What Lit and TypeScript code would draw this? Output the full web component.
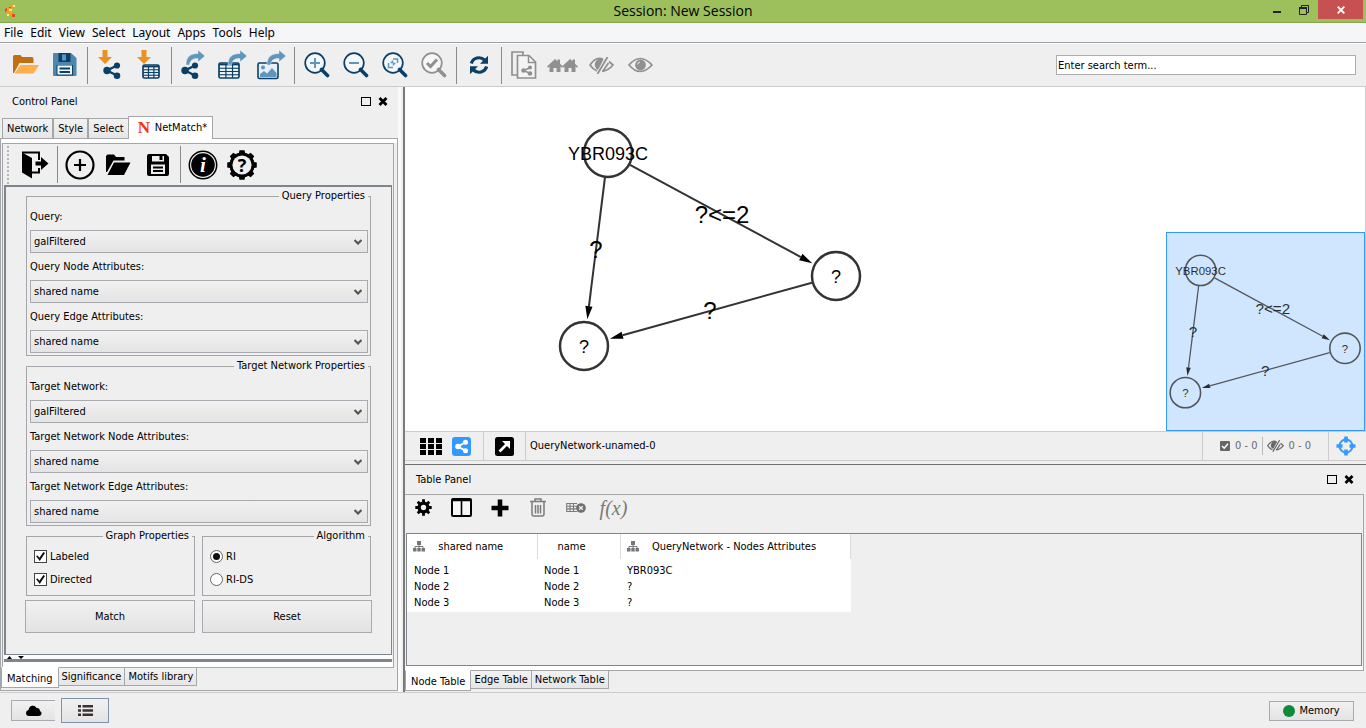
import { LitElement, html, svg, css, type TemplateResult } from "lit";
import { customElement, property, state } from "lit/decorators.js";
import { classMap } from "lit/directives/class-map.js";

const NAVY = "#0a4068";
const BLUE = "#5f96bd";
const ORANGE = "#ea9123";
const GRAY = "#909090";

const icon = (w: number, h: number, body: unknown) =>
  html`<svg width=${w} height=${h} viewBox="0 0 ${w} ${h}" aria-hidden="true">${body}</svg>`;

/* ---------- shared glyph pieces ---------- */

const share = (x: number, y: number) => svg`
  <g transform="translate(${x} ${y})" fill=${NAVY} stroke=${NAVY}>
    <path d="M14 3.5L4 8.5L14 13.5" fill="none" stroke-width="2.4"/>
    <circle cx="14" cy="3.5" r="3.1" stroke="none"/>
    <circle cx="4" cy="8.5" r="3.7" stroke="none"/>
    <circle cx="14" cy="13.7" r="3.3" stroke="none"/>
  </g>`;

const grid = (x: number, y: number, w: number, h: number, rows: number) => {
  const rh = (h - 4) / rows;
  return svg`<g transform="translate(${x} ${y})">
    <rect x="1" y="1" width=${w - 2} height=${h - 2} rx="1.5" fill="#f4f7f9" stroke=${NAVY} stroke-width="1.700"/>
    <path d="M1 2.500H${w - 1}" stroke=${NAVY} stroke-width="1.800"/>
    ${Array.from({ length: rows - 1 }, (_, i) =>
      svg`<path d="M1 ${3 + rh * (i + 1)}H${w - 1}" stroke=${NAVY} stroke-width="1.1"/>`)}
    <path d="M${w * 0.36} 2V${h - 1}M${w * 0.66} 2V${h - 1}" stroke=${NAVY} stroke-width="1.2"/>
  </g>`;
};

const downArrow = svg`<path d="M4.500 0h5v7h4.500L7 14L0 7H4.500z" fill=${ORANGE}/>`;
const exportArrow = (x: number) => svg`<g transform="translate(${x} 0)">
  <path d="M0 15C0 7 4 3.500 12 3.500V0L19 6L12 12V8.500C7 8.500 4 10 3.500 15z" fill=${BLUE} stroke="#efefef" stroke-width=".5"/></g>`;

const lens = (color: string, inner: unknown) =>
  icon(26, 26, svg`
    <circle cx="11" cy="11" r="9.800" fill="#f6f7f8" stroke=${color} stroke-width="1.700"/>
    <path d="M17.500 17.500L23.500 23.500" stroke=${color} stroke-width="3.600" stroke-linecap="round"/>
    ${inner}`);

const eye = (color: string) => svg`
  <path d="M1 8Q12 -5 24 8Q12 21 1 8z" fill="none" stroke=${color} stroke-width="1.700"/>
  <circle cx="12.500" cy="8" r="5.400" fill=${color}/>
  <path d="M9.500 7.500A3 3 0 0 1 12 5" fill="none" stroke="#efefef" stroke-width="1"/>`;

const eyeSlash = (color: string) => svg`
  <path d="M14 2.200Q7 -1 1 8Q4 12.500 8 14" fill="none" stroke=${color} stroke-width="1.700"/>
  <path d="M20 4.500L24 8Q19 14 13 14.300" fill="none" stroke=${color} stroke-width="1.700"/>
  <path d="M14.500 2.500A5.600 5.600 0 0 0 9 13z" fill=${color}/>
  <path d="M18.500 0L8.500 17M19.500 6L14 14" stroke=${color} stroke-width="1.800"/>`;

const gearPath = (cx: number, cy: number, ro: number, ri: number) => {
  const pts: string[] = [];
  for (let i = 0; i < 8; i++) {
    const a = (i * Math.PI) / 4;
    for (const [d, r] of [[-0.25, ri], [-0.17, ro], [0.17, ro], [0.25, ri]] as const) {
      pts.push(`${(cx + r * Math.sin(a + d)).toFixed(2)} ${(cy - r * Math.cos(a + d)).toFixed(2)}`);
    }
  }
  return `M${pts.join("L")}z`;
};

const house = (x: number) => svg`<path transform="translate(${x} 0)" fill=${GRAY}
  d="M0 8.500L8 1L10.500 3.300V1.500H13V5.700L16 8.500L15 9.800L13.500 8.500V14H9.500V10H6.500V14H2.500V8.500L1 9.800z"/>`;

const tree = icon(12, 11, svg`
  <path d="M6 3V6M2 8V5.500H10V8M6 5V8" fill="none" stroke="#777" stroke-width="1"/>
  <path d="M4 0H8V4H4zM0 7H3.500V10.500H0zM4.300 7H7.700V10.500H4.300zM8.500 7H12V10.500H8.500z" fill="#74767c"/>`);

const maximize = icon(10, 10, svg`<rect x=".5" y=".5" width="9" height="8" fill="none" stroke="#000" stroke-width="1"/>`);
const cross = icon(10, 10, svg`<path d="M1.500 1L8.500 8M8.500 1L1.500 8" stroke="#000" stroke-width="2.800"/>`);

/* ---------- toolbar content ---------- */

type Tool = [label: string, glyph: TemplateResult];

const mainTools: Tool[][] = [
  [
    ["Open session", icon(26, 20, svg`
      <path d="M0 18V1.500Q0 0 1.500 0H7Q8 0 9 2H19Q20.500 2 20.500 4V8H6.500L1 18z" fill="#c26f14"/>
      <path d="M7.500 10H26L20.500 18.500H1.500z" fill="#ffae4d"/>`)],
    ["Save session", icon(24, 24, svg`
      <path d="M0 1Q0 0 1 0H18L23.500 5V22Q23.500 23 22.500 23H1Q0 23 0 22z" fill="#4f86ad"/>
      <path d="M5.500 0H17.500V9H5.500z" fill=${NAVY}/><path d="M9 1.500h4v6H9z" fill="#5f96bd"/>
      <path d="M3.500 12H20V22.500H3.500z" fill=${NAVY}/>
      <path d="M4.500 12.500H19V21.500H4.500z" fill="#f3f6f8"/>
      <path d="M6.500 14.500h10.500v2H6.500zM6.500 18h10.500v2H6.500z" fill=${NAVY}/>`)],
  ],
  [
    ["Import network", icon(24, 30, svg`${downArrow}${share(5, 12)}`)],
    ["Import table", icon(24, 30, svg`${downArrow}${grid(5, 14, 18, 15, 4)}`)],
  ],
  [
    ["Export network", icon(26, 30, svg`${exportArrow(5)}${share(0, 12)}`)],
    ["Export table", icon(30, 30, svg`${grid(0, 12, 22, 17, 4)}${exportArrow(10)}`)],
    ["Export image", icon(30, 30, svg`
      <rect x="1" y="13" width="20" height="15.500" rx="1.500" fill="#e9f0f5" stroke=${NAVY} stroke-width="1.600"/>
      <circle cx="6" cy="17.500" r="2" fill=${BLUE}/>
      <path d="M3 27V24L7 21L10 23.500L15 18L19.500 23V27z" fill=${BLUE}/>${exportArrow(10)}`)],
  ],
  [
    ["Zoom in", lens(NAVY, svg`<path d="M6 11H16M11 6V16" stroke=${BLUE} stroke-width="2"/>`)],
    ["Zoom out", lens(NAVY, svg`<path d="M6 11H16" stroke=${BLUE} stroke-width="2"/>`)],
    ["Fit content", lens(NAVY, svg`<path d="M11 7H15.500V11M6.500 11V15.500H11M11.500 13.500V11.500H13.500M10.500 8.500V10.500H8.500" fill="none" stroke=${BLUE} stroke-width="1.500"/>`)],
    ["Fit selected", lens(GRAY, svg`<path d="M6 11L9.500 14.500L16 7.500" fill="none" stroke=${GRAY} stroke-width="3"/>`)],
  ],
  [
    ["Refresh layout", icon(20, 20, svg`
      <path d="M2.300 8.500A8 8 0 0 1 15.500 5M17.700 11.500A8 8 0 0 1 4.500 15" fill="none" stroke=${NAVY} stroke-width="3.200"/>
      <path d="M19 .8V8.800H11zM1 19.200V11.200H9z" fill=${NAVY}/>`)],
  ],
  [
    ["New network from selection", icon(26, 28, svg`
      <path d="M6 24H1V1H12V4" fill="none" stroke=${GRAY} stroke-width="1.700"/>
      <path d="M6.500 4.500H18L24.500 11V27H6.500z" fill="#f4f4f4" stroke=${GRAY} stroke-width="1.700"/>
      <path d="M17.500 4.500V11.500H24.500" fill="none" stroke=${GRAY} stroke-width="1.500"/>
      <path d="M19.500 16.500L12.500 19.500L19.500 22.500" fill="none" stroke=${GRAY} stroke-width="1.500"/>
      <circle cx="19" cy="16.500" r="2" fill=${GRAY}/><circle cx="12.500" cy="19.500" r="2.300" fill=${GRAY}/><circle cx="19" cy="22.500" r="2.300" fill=${GRAY}/>`)],
    ["First neighbors", icon(31, 15, svg`${house(0)}${house(15)}`)],
    ["Hide selected", icon(25, 17, eyeSlash(GRAY))],
    ["Show all", icon(25, 16, eye(GRAY))],
  ],
];

const panelTools: Tool[][] = [
  [
    ["Exit", icon(28, 28, svg`
      <path d="M1 1.500L11 7V27.500L1 21.500z" fill="#000"/>
      <path d="M1 1.500H18V9M18 17V21.500H11" fill="none" stroke="#000" stroke-width="2"/>
      <path d="M14.500 10.500H20V6L27.500 12.500L20 19V14.500H14.500z" fill="#000"/>`)],
  ],
  [
    ["New query", icon(30, 30, svg`<circle cx="15" cy="15" r="13.500" fill="none" stroke="#000" stroke-width="2.200"/><path d="M9 15H21M15 9V21" stroke="#000" stroke-width="2.200"/>`)],
    ["Open query", icon(25, 22, svg`<path d="M0 18V2L1.500 .5H8L10 3H18.500V6.500H7.500L1 18z"/><path d="M8 8.500H24.500L18 21H1.500z"/>`)],
    ["Save query", icon(22, 22, svg`
      <path d="M2 0H19L22 3V20Q22 22 20 22H2Q0 22 0 20V2Q0 0 2 0z"/>
      <path d="M5 2H17V7.500H5z" fill="#efefef"/><path d="M12.500 2H15.500V6H12.500z"/>
      <path d="M4 10.500H18V20H4z" fill="#efefef"/><path d="M6 12.500h10v2H6zM6 16h10v2H6z"/>`)],
  ],
  [
    ["About", icon(30, 30, svg`<circle cx="15" cy="15" r="13.700" fill="none" stroke="#000" stroke-width="1.500"/><circle cx="15" cy="15" r="11.800"/>
      <text x="15" y="22" text-anchor="middle" font-family="Liberation Serif, serif" font-weight="bold" font-style="italic" font-size="21" fill="#fff">i</text>`)],
    ["Help", icon(30, 30, svg`<path d=${gearPath(15, 15, 15, 12.5)}/><circle cx="15" cy="15" r="12.500"/><circle cx="15" cy="15" r="9.600" fill="#efefef"/>
      <text x="15" y="21.500" text-anchor="middle" font-family="Open Sans, sans-serif" font-weight="bold" font-size="18" fill="#000">?</text>`)],
  ],
];

const tableTools: Tool[] = [
  ["Table options", icon(17, 17, svg`<path d=${gearPath(8.5, 8.5, 8.3, 5.8)}/><circle cx="8.500" cy="8.500" r="6"/><circle cx="8.500" cy="8.500" r="2.700" fill="#efefef"/>`)],
  ["Show columns", icon(21, 19, svg`<rect x="1" y="1" width="19" height="17" rx="1" fill="#f6f6f6" stroke="#000" stroke-width="2"/><path d="M1 2H20" stroke="#000" stroke-width="2.500"/><path d="M10.500 2V18" stroke="#000" stroke-width="1.600"/>`)],
  ["Create column", icon(18, 18, svg`<path d="M9 .5V17.500M.5 9H17.500" stroke="#000" stroke-width="4.600"/>`)],
  ["Delete columns", icon(18, 19, svg`<path d="M1 3.500H17M6 3V1H12V3M3 4V16Q3 18 5 18H13Q15 18 15 16V4M6.500 7V15.500M9 7V15.500M11.500 7V15.500" fill="none" stroke="#7b7b7b" stroke-width="1.500"/>`)],
  ["Delete table", icon(20, 12, svg`<path d="M.5 1.500H11M.5 4.200H11M.5 6.900H11M.5 9.500H11M.7 1V10M4 1V10M7.500 1V10" stroke="#7b7b7b" stroke-width="1.100" fill="none"/><circle cx="15" cy="6" r="4.800" fill="#6f6f6f"/><path d="M13.200 4.200L16.800 7.800M16.800 4.200L13.200 7.800" stroke="#efefef" stroke-width="1.400"/>`)],
];

/* ---------- network drawing ---------- */

interface GraphNode { x: number; y: number; label: string }
const nodes: GraphNode[] = [
  { x: 203, y: 66, label: "YBR093C" },
  { x: 431, y: 189, label: "?" },
  { x: 179, y: 259, label: "?" },
];
const edges: { from: number; to: number; label: string }[] = [
  { from: 0, to: 1, label: "?<=2" },
  { from: 0, to: 2, label: "?" },
  { from: 1, to: 2, label: "?" },
];

@customElement("network-graph")
class NetworkGraph extends LitElement {
  @property() box = "0 0 480 344";

  static styles = css`
    :host { display: block; }
    svg { display: block; width: 100%; height: 100%; }
    text { font-family: "Liberation Sans", Arial, sans-serif; text-anchor: middle; fill: #000; }
    .node { font-size: 18px; }
    .edge { font-size: 24px; }
  `;

  private edge(e: (typeof edges)[number]) {
    const a = nodes[e.from];
    const b = nodes[e.to];
    const len = Math.hypot(b.x - a.x, b.y - a.y);
    const ux = (b.x - a.x) / len;
    const uy = (b.y - a.y) / len;
    const tx = b.x - ux * 27;
    const ty = b.y - uy * 27;
    const bx = tx - ux * 13;
    const by = ty - uy * 13;
    return svg`
      <path d="M${a.x + ux * 25} ${a.y + uy * 25}L${bx} ${by}" stroke="#333" stroke-width="2"/>
      <path d="M${tx} ${ty}L${bx - uy * 3.6} ${by + ux * 3.6}L${bx + uy * 3.6} ${by - ux * 3.6}z" fill="#000"/>
      <text class="edge" x=${(a.x + b.x) / 2} y=${(a.y + b.y) / 2 + 8}>${e.label}</text>`;
  }

  render() {
    return html`<svg viewBox=${this.box} role="img" aria-label="Query network">
      ${edges.map((e) => this.edge(e))}
      ${nodes.map((n) => svg`
        <circle cx=${n.x} cy=${n.y} r="24" fill="none" stroke="#333" stroke-width="2.500"/>
        <text class="node" x=${n.x} y=${n.y + 7}>${n.label}</text>`)}
    </svg>`;
  }
}

/* ---------- page ---------- */

@customElement("app-root")
class AppRoot extends LitElement {
  @state() private algorithm = "RI";

  static styles = css`
    * { box-sizing: border-box; }
    :host {
      display: flex;
      flex-direction: column;
      min-height: 100vh;
      background: #efefef;
      color: #000;
      font: 11px/14px "DejaVu Sans Condensed", "Noto Sans", sans-serif;
    }
    button, input, select { font: inherit; color: inherit; margin: 0; }
    button { padding: 0; border: 0; background: none; display: flex; align-items: center; justify-content: center; }
    svg { display: block; flex: none; }
    h1, h2 { margin: 0; font-weight: normal; font-size: inherit; }

    .titlebar { display: grid; grid-template-columns: 1fr auto 1fr; height: 23px; background: #9dbf5c; border-bottom: 1px solid #86a54c; }
    .app-mark { padding: 4px 0 0 4px; }
    .titlebar h1 { font: 14px/22px "Open Sans", "Noto Sans", sans-serif; }
    .window { display: flex; justify-content: flex-end; padding-right: 3px; }
    .window button { width: 27px; height: 19px; }
    .window .close { width: 45px; background: #c75050; margin-left: 1px; }

    .menubar { display: flex; gap: 7px; height: 20px; padding-left: 4px; background: #f5f6f8; border-bottom: 1px solid #a0a0a0; }
    .menubar a { color: #000; text-decoration: none; font: 12px/19px "Noto Sans", sans-serif; }

    .toolbar { display: flex; align-items: center; height: 44px; padding: 0 10px 0 6px; border-top: 1px solid #fff; border-bottom: 1px solid #ccc; }
    .tool { width: 39px; height: 36px; }
    .sep { flex: none; width: 1px; height: 37px; margin: 0 2px 0 3px; background: #8a8a8a; }
    .search { width: 300px; height: 20px; margin-left: auto; padding: 0 1px; border: 1px solid #abadb3; background: #fff; }

    .main { flex: 1; display: flex; }
    .control { flex: none; width: 398px; display: flex; flex-direction: column; }
    .splitter { flex: none; width: 7px; border-left: 3px solid #fafafa; border-right: 2px solid #7a7a7a; }
    .panel-head { display: flex; align-items: center; gap: 7px; height: 29px; padding-left: 12px; }
    .panel-head h2 { flex: 1; }
    .panel-head button { width: 10px; height: 10px; }
    .control .panel-head { padding-right: 10px; }

    .tabs { display: flex; }
    .tabs.top { align-items: flex-end; padding-left: 2px; height: 22px; }
    .tab { height: 20px; padding: 0 4px; border: 1px solid #a4a6a9; background: linear-gradient(#f2f2f2, #e6e6e6); white-space: nowrap; }
    .tabs.top .tab { border-bottom: 0; }
    .tabs.top .tab.on { z-index: 1; height: 23px; margin: 0 0 -1px -1px; padding: 0 5px 0 7px; gap: 3px; background: #fff; }
    .tabs.bottom { align-items: flex-start; }
    .tabs.bottom .tab { height: 19px; margin-top: -1px; padding: 0 3px; }
    .tabs.bottom .tab + .tab { margin-left: -1px; }
    .tabs.bottom .tab.on { z-index: 1; height: 21px; padding: 3px 5px 0; background: #fff; border-top-color: #fff; }
    .tabs.sub { padding-bottom: 2px; }

    .outer { flex: 1; display: flex; flex-direction: column; margin-bottom: 1px; padding-top: 4px; border: 1px solid #a4a6a9; background: linear-gradient(#fff 4px, transparent 4px); }
    .frame { flex: 1; display: flex; flex-direction: column; margin: 0 3px 0 1px; padding: 0 1px 5px; border: 1px solid #a4a6a9; background: linear-gradient(to top, #fff 5px, transparent 5px); }
    .panel-tools { display: flex; align-items: center; height: 41px; padding-left: 3px; }
    .grip { width: 2px; height: 38px; margin-right: 6px; background: repeating-linear-gradient(#b4b4b4 0 2px, #efefef 2px 4px); }

    .form { flex: 1; display: flex; flex-direction: column; gap: 3px; padding: 2px 20px; border: 2px solid #7f858f; border-right-width: 1px; border-bottom-width: 1px; }
    fieldset { margin: 0; min-width: 0; padding: 0 2px 2px 3px; border: 1px solid #a4a6a9; }
    legend { margin-left: auto; padding: 0 3px; line-height: 14px; }
    .field { display: flex; flex-direction: column; }
    .field label { height: 27px; line-height: 27px; }
    .combo { display: grid; align-items: center; }
    .combo > * { grid-area: 1 / 1; }
    .combo select { appearance: none; width: 100%; height: 23px; padding: 0 3px; border: 1px solid #a8aab0; border-radius: 0; background: linear-gradient(#f1f1f1, #e4e4e4); }
    .combo svg { justify-self: end; margin-right: 6px; pointer-events: none; }
    .pair { display: grid; grid-template-columns: 1fr 1fr; gap: 7px; }
    .pair.actions { margin: 1px -1px 0; }
    .pair fieldset { padding: 2px 2px 4px 7px; }
    .choice { display: flex; align-items: center; gap: 3px; height: 23px; }
    .choice input { appearance: none; display: grid; place-items: center; width: 13px; height: 13px; border: 1px solid #444; background: #fff; }
    .choice input[type="radio"] { border-color: #666; border-radius: 50%; }
    .choice input:checked::before { content: ""; width: 9px; height: 9px; background: #111; clip-path: polygon(0 45%, 18% 38%, 38% 65%, 82% 0, 100% 12%, 42% 100%); }
    .choice input[type="radio"]:checked::before { width: 7px; height: 7px; border-radius: 50%; clip-path: none; }
    .push { border: 1px solid #a8aab0; background: linear-gradient(#f1f1f1, #e3e3e3); }
    .actions .push { height: 33px; }
    .shelf { height: 7px; padding: 1px 3px 0; background: linear-gradient(#fbfbfb 4px, #7f858f 4px); }

    .right { flex: 1; min-width: 0; display: flex; flex-direction: column; }
    .canvas { flex: 1; position: relative; min-height: 344px; background: #fff; border-right: 1px solid #ccc; }
    .canvas .graph { width: 480px; height: 344px; }
    .overview { position: absolute; right: 0; bottom: 0; width: 199px; height: 199px; border: 1px solid #3399ff; background: #d0e6ff; }
    .overview network-graph { height: 100%; opacity: .8; }

    .netbar { display: flex; align-items: stretch; height: 30px; border-top: 1px solid #ccc; border-bottom: 1px solid #ccc; }
    .netbar > * { display: flex; align-items: center; }
    .netbar .cell { border-left: 1px solid #ccc; }
    .views { gap: 9px; padding: 0 12px 0 15px; }
    .detach { padding: 0 11px; }
    .netname { flex: 1; padding-left: 4px; }
    .counts { color: #6a6a6a; padding-left: 17px; }
    .counts span { display: flex; align-items: center; gap: 5px; height: 18px; }
    .counts .hidden-count { border-left: 1px solid #bbb; margin-left: 4px; padding: 0 17px 0 4px; }
    .locate { padding: 0 10px 0 7px; }

    .table-panel { margin-top: 3px; border-top: 1px solid #6e6e6e; height: 228px; display: flex; flex-direction: column; }
    .table-panel .panel-head { height: 29px; padding: 0 12px 0 11px; }
    .table-frame { flex: 1; display: flex; flex-direction: column; margin-right: 2px; padding: 0 1px 4px; border: solid #a4a6a9; border-width: 1px 1px 1px 0; background: linear-gradient(to top, #fff 4px, transparent 4px); }
    .table-tools { display: flex; height: 38px; }
    .table-tools button { width: 38px; height: 25px; padding-right: 3px; color: #7a7a7a; }
    .table-tools .fx { font: italic 20px/24px "Liberation Serif", serif; }
    .table-box { flex: 1; border: 1px solid #7f858f; }
    table { border-collapse: collapse; background: #fff; table-layout: fixed; width: 443px; }
    th { height: 25px; padding: 0; font-weight: normal; border-right: 1px solid #ddd; }
    .th { display: flex; align-items: center; padding: 0 20px 0 6px; }
    .th span { flex: 1; text-align: center; white-space: nowrap; }
    td { height: 16px; padding: 0 7px; }
    tbody::before { content: ""; display: block; height: 4px; }
    tbody::after { content: ""; display: block; height: 1px; }
    .node-tabs { height: 21px; }

    .status { display: flex; align-items: center; gap: 6px; height: 36px; padding: 0 12px 0 11px; border-top: 1px solid #ccc; }
    .status .cloud { width: 44px; height: 21px; border-right: 0; }
    .status .list { width: 48px; height: 25px; border: 1px solid #7f93a8; }
    .status .memory { width: 85px; height: 20px; margin-left: auto; gap: 4px; }
    .dot { width: 12px; height: 12px; border-radius: 50%; background: #0f8a3a; }
  `;

  private tools(groups: Tool[][]) {
    return groups.map((g, i) => html`
      ${i ? html`<span class="sep"></span>` : ""}
      ${g.map(([label, glyph]) => html`<button class="tool" aria-label=${label}>${glyph}</button>`)}`);
  }

  private field(id: string, label: string, value: string) {
    return html`<div class="field">
      <label for=${id}>${label}</label>
      <div class="combo">
        <select id=${id}><option>${value}</option></select>
        ${icon(8, 7, svg`<path d="M.5 2L4 5.500L7.500 2" fill="none" stroke="#555" stroke-width="2.200"/>`)}
      </div>
    </div>`;
  }

  private tabs(cls: string, names: string[], active: number) {
    return html`<div class="tabs ${cls}" role="tablist">
      ${names.map((n, i) => html`<button role="tab" aria-selected=${i === active}
        class=${classMap({ tab: true, on: i === active })}>
        ${n === "NetMatch*" ? icon(16, 20, svg`<text x="8" y="15" text-anchor="middle" font-family="Liberation Serif, serif" font-weight="bold" font-size="17" fill="#f5330c">N</text>`) : ""}${n}</button>`)}
    </div>`;
  }

  private panelHead(title: string) {
    return html`<div class="panel-head"><h2>${title}</h2>
      <button aria-label="Float ${title}">${maximize}</button>
      <button aria-label="Close ${title}">${cross}</button></div>`;
  }

  private control() {
    return html`<section class="control">
      ${this.panelHead("Control Panel")}
      ${this.tabs("top", ["Network", "Style", "Select", "NetMatch*"], 3)}
      <div class="outer">
        <div class="frame">
          <div class="panel-tools"><span class="grip"></span>${this.tools(panelTools)}</div>
          <form class="form" @submit=${(e: Event) => e.preventDefault()}>
            <fieldset>
              <legend>Query Properties</legend>
              ${this.field("q", "Query:", "galFiltered")}
              ${this.field("qn", "Query Node Attributes:", "shared name")}
              ${this.field("qe", "Query Edge Attributes:", "shared name")}
            </fieldset>
            <fieldset>
              <legend>Target Network Properties</legend>
              ${this.field("t", "Target Network:", "galFiltered")}
              ${this.field("tn", "Target Network Node Attributes:", "shared name")}
              ${this.field("te", "Target Network Edge Attributes:", "shared name")}
            </fieldset>
            <div class="pair">
              <fieldset>
                <legend>Graph Properties</legend>
                <label class="choice"><input type="checkbox" checked />Labeled</label>
                <label class="choice"><input type="checkbox" checked />Directed</label>
              </fieldset>
              <fieldset>
                <legend>Algorithm</legend>
                ${["RI", "RI-DS"].map((a) => html`<label class="choice">
                  <input type="radio" name="algorithm" .checked=${this.algorithm === a}
                    @change=${() => (this.algorithm = a)} />${a}</label>`)}
              </fieldset>
            </div>
            <div class="pair actions">
              <button class="push">Match</button>
              <button class="push" type="reset">Reset</button>
            </div>
          </form>
          <div class="shelf">${icon(18, 3, svg`<path d="M0 3L2.500 0L5 3zM11 0H17L14 3z"/>`)}</div>
        </div>
        ${this.tabs("bottom sub", ["Matching", "Significance", "Motifs library"], 0)}
      </div>
    </section>`;
  }

  private network() {
    return html`
      <div class="canvas">
        <network-graph class="graph"></network-graph>
        <div class="overview"><network-graph box="150 7 311 311"></network-graph></div>
      </div>
      <div class="netbar">
        <div class="views">
          <button aria-label="Grid view">${icon(23, 17, svg`<path d="M0 0h6v5H0zM8 0h6v5H8zM16 0h6v5h-6zM0 6h6v5H0zM8 6h6v5H8zM16 6h6v5h-6zM0 12h6v5H0zM8 12h6v5H8zM16 12h6v5h-6z"/>`)}</button>
          <button aria-label="Network view">${icon(19, 19, svg`<rect width="19" height="19" rx="3" fill="#3399ff"/><path d="M14 5L6 9.500L14 14" fill="none" stroke="#fff" stroke-width="2"/><circle cx="13.500" cy="5.300" r="2.500" fill="#fff"/><circle cx="6" cy="9.500" r="2.800" fill="#fff"/><circle cx="13.500" cy="13.700" r="2.500" fill="#fff"/>`)}</button>
        </div>
        <div class="cell detach"><button aria-label="Detach view">${icon(19, 19, svg`<rect width="19" height="19" rx="2.500"/><path d="M4.500 14.500L12 7" stroke="#fff" stroke-width="2.600"/><path d="M7 4H15V12z" fill="#fff"/>`)}</button></div>
        <div class="cell netname">QueryNetwork-unamed-0</div>
        <div class="cell counts">
          <span>${icon(10, 10, svg`<rect width="10" height="10" rx="1" fill="#666"/><path d="M2 5L4.200 7.200L8 2.800" fill="none" stroke="#fff" stroke-width="1.500"/>`)}0 - 0</span>
          <span class="hidden-count"><svg width="17" height="12" viewBox="0 0 25 17" aria-hidden="true">${eyeSlash("#666")}</svg>0 - 0</span>
        </div>
        <div class="cell locate"><button aria-label="Show overview">${icon(20, 20, svg`<circle cx="10" cy="10" r="6.500" fill="none" stroke="#3399ff" stroke-width="2"/><path d="M10 .5V6.500M10 13.500V19.500M.5 10H6.500M13.500 10H19.500" stroke="#3399ff" stroke-width="3.600"/>`)}</button></div>
      </div>`;
  }

  private tablePanel() {
    const rows = [["Node 1", "Node 1", "YBR093C"], ["Node 2", "Node 2", "?"], ["Node 3", "Node 3", "?"]];
    return html`<section class="table-panel">
      ${this.panelHead("Table Panel")}
      <div class="table-frame">
        <div class="table-tools">
          ${tableTools.map(([label, glyph]) => html`<button aria-label=${label}>${glyph}</button>`)}
          <button class="fx" aria-label="Function builder">f(x)</button>
        </div>
        <div class="table-box">
          <table>
            <colgroup><col style="width:130px" /><col style="width:83px" /><col style="width:230px" /></colgroup>
            <thead><tr>
              <th><div class="th">${tree}<span>shared name</span></div></th>
              <th><div class="th"><span>name</span></div></th>
              <th><div class="th">${tree}<span>QueryNetwork - Nodes Attributes</span></div></th>
            </tr></thead>
            <tbody>${rows.map((r) => html`<tr>${r.map((c) => html`<td>${c}</td>`)}</tr>`)}</tbody>
          </table>
        </div>
      </div>
      ${this.tabs("bottom node-tabs", ["Node Table", "Edge Table", "Network Table"], 0)}
    </section>`;
  }

  render() {
    return html`
      <header class="titlebar">
        <div class="app-mark">${icon(13, 14, svg`
          <path d="M1 5L5 3L9 0L11 2L8 5L7 7L10 9V12L6 11L3 9L1 8z" fill="#f2a21e"/>
          <path d="M1 5l2-1v3l-2 1zM8 10h3v3H8zM5 3h2v1H5z" fill="#d4501e"/><path d="M5 5h3v2H5zM9 1h2v2H9zM3 10h2v2H3z" fill="#ffe9a0"/>`)}</div>
        <h1>Session: New Session</h1>
        <div class="window">
          <button aria-label="Minimize">${icon(8, 8, svg`<path d="M0 5h8v2H0z" fill="#222"/>`)}</button>
          <button aria-label="Restore">${icon(10, 10, svg`<path d="M2.500 2V.5H9.500V7.500H8" fill="none" stroke="#222"/><path d="M.5 3H7.500V9.500H.5z" fill="none" stroke="#222"/><path d="M0 3h8" stroke="#222" stroke-width="2"/>`)}</button>
          <button class="close" aria-label="Close">${icon(8, 8, svg`<path d="M.7 .7L7.300 7.300M7.300 .7L.7 7.300" stroke="#fff" stroke-width="1.900"/>`)}</button>
        </div>
      </header>
      <nav class="menubar">
        ${["File", "Edit", "View", "Select", "Layout", "Apps", "Tools", "Help"].map((m) => html`<a href="#">${m}</a>`)}
      </nav>
      <div class="toolbar">
        ${this.tools(mainTools)}
        <input class="search" type="text" aria-label="Search" value="Enter search term..." />
      </div>
      <main class="main">
        ${this.control()}
        <div class="splitter"></div>
        <div class="right">${this.network()}${this.tablePanel()}</div>
      </main>
      <footer class="status">
        <button class="push cloud" aria-label="Cloud">${icon(16, 12, svg`<path d="M3 11Q0 11 0 8Q0 5.500 2.500 5Q3 1.500 6 .8Q9 0 10.500 3Q13.500 2.500 14 6Q16 7 15.500 9Q15 11 12.500 11z"/>`)}</button>
        <button class="push list" aria-label="Tasks">${icon(15, 11, svg`<path d="M0 0h3v2.500H0zM4.500 0H15v2.500H4.500zM0 4.200h3v2.500H0zM4.500 4.200H15v2.500H4.500zM0 8.400h3v2.500H0zM4.500 8.400H15v2.500H4.500z" fill="#3a2f33"/>`)}</button>
        <button class="push memory"><span class="dot"></span>Memory</button>
      </footer>`;
  }
}
